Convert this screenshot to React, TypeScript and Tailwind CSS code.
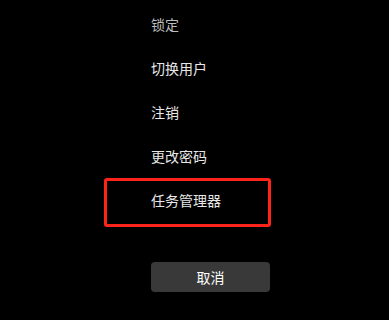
import React from 'react';

const items = ['锁定', '切换用户', '注销', '更改密码'];

function App() {
    return (
        <div
            className="w-[389px] h-[320px] bg-black overflow-hidden"
            style={{ fontFamily: '"Noto Sans CJK SC", "Noto Sans", sans-serif' }}
        >
            <div className="flex flex-col pt-[2px] pl-[104px] w-[271px]">
                {items.map((label, i) => (
                    <div
                        key={label}
                        className={`h-[44px] flex items-center pl-[47px] text-[14px] ${i === 0 ? 'text-[#bdbdbd]' : 'text-[#e8e8e8]'}`}
                    >
                        {label}
                    </div>
                ))}
                <div className="h-[49px] border-[3px] border-[#ff2419] rounded-[3px] flex items-center pl-[44px] pb-[5px] text-[14px] text-[#e8e8e8]">
                    任务管理器
                </div>
                <button className="mt-[35px] ml-[47px] w-[119px] h-[30px] rounded-[4px] bg-[#393939] text-white text-[14px] flex items-center justify-center">
                    取消
                </button>
            </div>
        </div>
    );
}

export default App;
